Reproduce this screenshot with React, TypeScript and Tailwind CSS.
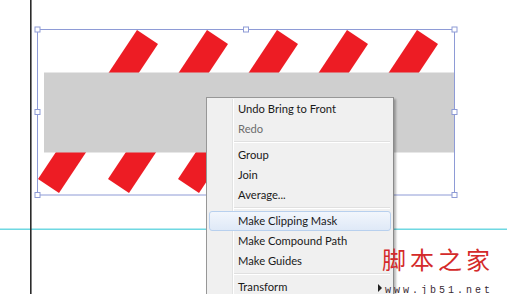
import React from "react";

type Item =
  | { kind: "item"; label: string; disabled?: boolean; active?: boolean; sub?: boolean }
  | { kind: "sep" };

const MENU: Item[] = [
  { kind: "item", label: "Undo Bring to Front" },
  { kind: "item", label: "Redo", disabled: true },
  { kind: "sep" },
  { kind: "item", label: "Group" },
  { kind: "item", label: "Join" },
  { kind: "item", label: "Average..." },
  { kind: "sep" },
  { kind: "item", label: "Make Clipping Mask", active: true },
  { kind: "item", label: "Make Compound Path" },
  { kind: "item", label: "Make Guides" },
  { kind: "sep" },
  { kind: "item", label: "Transform", sub: true },
];

const STRIPES = [0, 1, 2, 3, 4];
const HANDLES: [number, number][] = [
  [37.5, 29.5],
  [246, 29.5],
  [454.5, 29.5],
  [37.5, 112],
  [454.5, 112],
  [37.5, 195],
  [246, 195],
  [454.5, 195],
];

function Artboard() {
  return (
    <svg width="507" height="294" viewBox="0 0 507 294" className="absolute left-0 top-0">
      <rect x="0" y="0" width="507" height="294" fill="#ffffff" />
      {STRIPES.map((k) => {
        const dx = 70 * k;
        const pts = [
          [137 + dx, 30],
          [158 + dx, 44],
          [59 + dx, 193],
          [38 + dx, 179],
        ]
          .map((p) => p.join(","))
          .join(" ");
        return <polygon key={k} points={pts} fill="#ed1c24" />;
      })}
      <rect x="44" y="72.5" width="410" height="80" fill="#cfcfcf" />
      <rect x="0" y="228.5" width="507" height="1.5" fill="#6fd8e2" />
      <rect x="30" y="0" width="1.6" height="294" fill="#2b2b2b" />
      <rect x="37.5" y="29.5" width="417" height="165.5" fill="none" stroke="#8e9bd6" strokeWidth="1" />
      {HANDLES.map(([x, y], i) => (
        <rect
          key={i}
          x={x - 2.5}
          y={y - 2.5}
          width="5"
          height="5"
          fill="#ffffff"
          stroke="#8e9bd6"
          strokeWidth="1"
        />
      ))}
    </svg>
  );
}

function ContextMenu() {
  return (
    <div className="absolute left-[206px] top-[97px] w-[188px] border border-[#979797] border-r-[#8a8a8a] bg-[#f0f0f0] p-[1px] shadow-[2px_2px_2px_rgba(0,0,0,0.28)]">
      <div className="relative flex flex-col">
        <div className="absolute bottom-0 left-[24px] top-0 w-[2px] border-l border-[#e2e3e3] bg-white" />
        {MENU.map((it, i) =>
          it.kind === "sep" ? (
            <div key={i} className="relative flex h-[6px] items-center pl-[26px] pr-[2px]">
              <div className="h-[2px] w-full border-t border-[#e0e0e0] bg-white" />
            </div>
          ) : (
            <div
              key={i}
              className={
                it.active
                  ? "relative mx-[1px] flex h-[20px] items-center justify-between rounded-[3px] border border-[#b8d0ee] bg-gradient-to-b from-[#f2f6fc] to-[#dfe9f7] pl-[28px] pr-[8px]"
                  : "relative mx-[1px] flex h-[20px] items-center justify-between pl-[29px] pr-[9px]"
              }
            >
              <span
                className={
                  it.disabled
                    ? "text-[11.2px] leading-none text-[#6d6d6d]"
                    : "text-[11.2px] leading-none text-[#1a1a1a]"
                }
                style={{ fontFamily: 'Lato, "Noto Sans", sans-serif' }}
              >
                {it.label}
              </span>
              {it.sub ? (
                <span className="mt-[2px] h-0 w-0 border-y-[4px] border-l-[4px] border-y-transparent border-l-[#222]" />
              ) : null}
            </div>
          )
        )}
      </div>
    </div>
  );
}

function Watermark() {
  return (
    <div className="absolute left-[382px] top-[244px] flex flex-col">
      <span
        className="text-[24px] leading-[30px] tracking-[4px] text-[#d42a2a]"
        style={{ fontFamily: '"Noto Sans CJK SC", sans-serif' }}
      >
        脚本之家
      </span>
      <span
        className="ml-[3px] mt-[11px] text-[10px] leading-[12px] tracking-[3px] text-[#3a2a33]"
        style={{ fontFamily: '"Liberation Mono", monospace' }}
      >
        www.jb51.net
      </span>
    </div>
  );
}

export default function App() {
  return (
    <div className="relative h-[294px] w-[507px] overflow-hidden bg-white">
      <Artboard />
      <ContextMenu />
      <Watermark />
    </div>
  );
}
